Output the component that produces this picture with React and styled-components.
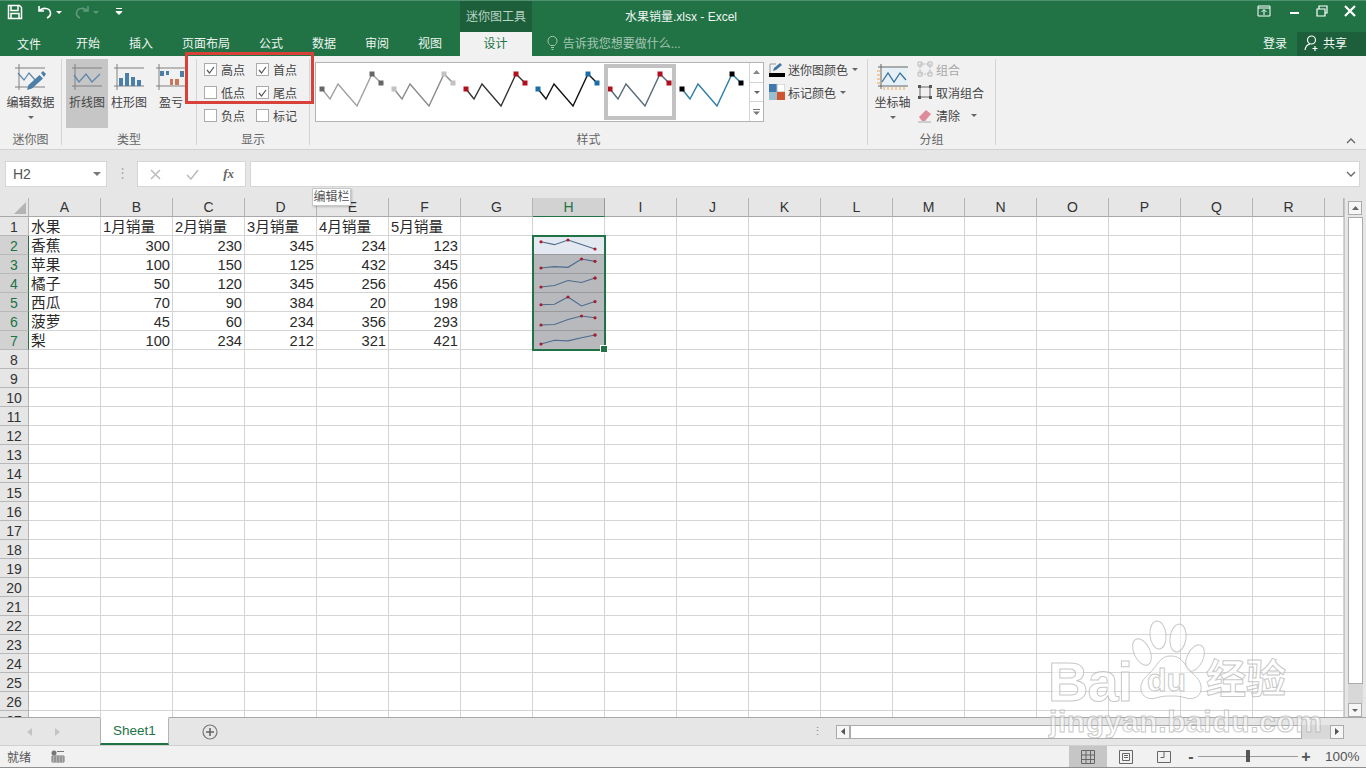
import styled, { createGlobalStyle } from 'styled-components';

const UI_FONT = '"Liberation Sans", "Noto Sans CJK SC", sans-serif';
const GREEN = '#217346';

const GlobalStyle = createGlobalStyle`
    html, body {
        margin: 0;
        padding: 0;
        overflow: hidden;
        background: #f1f1f1;
    }
    * {
        box-sizing: border-box;
    }
`;

const Window = styled.div`
    position: relative;
    width: 1366px;
    height: 768px;
    overflow: hidden;
    display: flex;
    flex-direction: column;
    font-family: ${UI_FONT};
    font-size: 12px;
    color: #444;
`;

/* title bar */
const TitleBar = styled.div`
    height: 32px;
    flex: none;
    display: flex;
    background: ${GREEN};
    border-top: 1px solid #4f9270;
    color: #fff;
`;
const Quick = styled.div`
    width: 460px;
    display: flex;
    align-items: flex-start;
    padding: 3px 0 0 7px;
`;
const ContextLabel = styled.div`
    width: 72px;
    background: #1c5f3a;
    color: #b9d3c4;
    display: flex;
    align-items: center;
    justify-content: center;
    padding-bottom: 3px;
`;
const DocTitle = styled.div`
    padding: 6px 0 0 93px;
    flex: 1;
    color: #f0f6f2;
`;
const WinButtons = styled.div`
    display: flex;
    align-items: flex-start;
    gap: 14px;
    padding: 3px 9px 0 0;
`;

/* tabs */
const TabBar = styled.div`
    height: 24px;
    flex: none;
    display: flex;
    align-items: stretch;
    background: ${GREEN};
    color: #fff;
`;
const Tab = styled.div`
    padding: 0 14.5px 3px;
    display: flex;
    align-items: center;
    white-space: nowrap;
    color: #eef5f0;
    &:first-child {
        padding: 0 20.5px 2px 17px;
    }
`;
const ActiveTab = styled.div`
    width: 72px;
    margin-left: 3px;
    padding-bottom: 3px;
    background: #f1f1f1;
    color: ${GREEN};
    display: flex;
    align-items: center;
    justify-content: center;
`;
const TellMe = styled.div`
    flex: 1;
    display: flex;
    align-items: center;
    gap: 5px;
    padding: 0 0 3px 15px;
    color: #a5c6b3;
`;
const Login = styled.div`
    padding: 0 10px 3px 0;
    display: flex;
    align-items: center;
    color: #f2f7f4;
`;
const Share = styled.div`
    width: 69px;
    background: #1c5f3a;
    display: flex;
    align-items: center;
    gap: 3px;
    padding: 0 0 3px 7px;
    color: #f2f7f4;
`;

/* ribbon */
const Ribbon = styled.div`
    position: relative;
    height: 94px;
    flex: none;
    display: flex;
    align-items: flex-start;
    background: #f1f1f1;
    border-bottom: 1px solid #d2d2d2;
    padding-top: 3px;
`;
const Group = styled.div`
    width: ${(p) => p.$w}px;
    height: 86px;
    flex: none;
    display: flex;
    flex-direction: column;
    border-right: 1px solid #d4d4d4;
`;
const GroupBody = styled.div`
    height: 69px;
    flex: none;
    display: flex;
    padding-left: ${(p) => p.$pad || 0}px;
`;
const GroupLabel = styled.div`
    flex: none;
    margin-top: 4px;
    text-align: center;
    color: #666;
    line-height: 17px;
`;
const BigButton = styled.div`
    width: ${(p) => p.$w || 42}px;
    height: 69px;
    flex: none;
    display: flex;
    flex-direction: column;
    align-items: center;
    padding-top: 3px;
    background: ${(p) => (p.$on ? '#c6c6c6' : 'transparent')};
    color: #444;
    white-space: nowrap;
`;
const BigText = styled.div`
    line-height: 16px;
    margin-top: 3px;
`;
const Caret = styled.span`
    width: 0;
    height: 0;
    display: inline-block;
    border-left: 3px solid transparent;
    border-right: 3px solid transparent;
    border-top: 3px solid ${(p) => p.$c || '#666'};
`;
const BigCaret = styled(Caret)`
    margin-top: 5px;
`;
const Checks = styled.div`
    display: grid;
    grid-template-columns: 52px 52px;
    grid-auto-rows: 23px;
    padding-left: 7px;
    margin-top: -1px;
`;
const CheckItem = styled.label`
    display: flex;
    align-items: center;
    gap: 4px;
    color: #444;
`;
const CheckBox = styled.span`
    width: 13px;
    height: 13px;
    flex: none;
    background: #fff;
    border: 1px solid #ababab;
    display: flex;
    align-items: center;
    justify-content: center;
`;
const Gallery = styled.div`
    margin: 3px 0 0 5px;
    width: 449px;
    height: 60px;
    display: flex;
    background: #fff;
    border: 1px solid #b4b4b4;
    padding-left: 1px;
`;
const Swatch = styled.div`
    width: 72px;
    height: ${(p) => (p.$on ? 56 : 58)}px;
    flex: none;
    margin: ${(p) => (p.$on ? '1px 1px 1px -1px' : '0')};
    border: ${(p) => (p.$on ? '4px solid #c2c2c2' : 'none')};
    display: flex;
`;
const GalleryNav = styled.div`
    margin-left: auto;
    width: 14px;
    display: flex;
    flex-direction: column;
    border-left: 1px solid #d4d4d4;
`;
const NavCell = styled.div`
    flex: 1;
    display: flex;
    align-items: center;
    justify-content: center;
    border-bottom: 1px solid #d4d4d4;
    &:last-child {
        border-bottom: none;
    }
`;
const ColorStack = styled.div`
    display: flex;
    flex-direction: column;
    gap: 3px;
    margin: 0 0 0 ${(p) => p.$left || 5}px;
    white-space: nowrap;
`;
const SmallButton = styled.div`
    height: 20px;
    display: flex;
    align-items: center;
    gap: 3px;
    color: ${(p) => (p.$off ? '#a8a8a8' : '#444')};
`;
const Collapse = styled.div`
    position: absolute;
    right: 10px;
    bottom: 5px;
`;

/* formula bar */
const FormulaBar = styled.div`
    height: 48px;
    flex: none;
    display: flex;
    align-items: flex-start;
    background: #e6e6e6;
    padding: 11px 6px 0 5px;
`;
const NameBox = styled.div`
    width: 102px;
    height: 26px;
    background: #fff;
    border: 1px solid #d6d6d6;
    display: flex;
    align-items: center;
    justify-content: space-between;
    padding: 0 5px 0 7px;
    font-size: 14px;
    color: #555;
`;
const Grip = styled.div`
    width: 30px;
    text-align: center;
    color: #aaa;
    line-height: 24px;
    font-size: 13px;
`;
const FxBox = styled.div`
    width: 109px;
    height: 26px;
    background: #fff;
    border: 1px solid #d6d6d6;
    display: flex;
    align-items: center;
    justify-content: space-between;
    padding: 0 11px 0 12px;
`;
const FxGlyph = styled.span`
    font-family: "Liberation Serif", serif;
    font-style: italic;
    font-weight: 700;
    font-size: 13px;
    color: #666;
`;
const FormulaInput = styled.div`
    margin-left: 4px;
    flex: 1;
    height: 26px;
    background: #fff;
    border: 1px solid #d6d6d6;
    display: flex;
    align-items: center;
    justify-content: flex-end;
    padding-right: 3px;
`;
const Hint = styled.div`
    position: absolute;
    left: 312px;
    top: 188px;
    width: 39px;
    height: 18px;
    background: #fff;
    border: 1px solid #c8c8c8;
    box-shadow: 1px 1px 2px rgba(0, 0, 0, 0.2);
    font-size: 12px;
    line-height: 16px;
    text-align: center;
    color: #555;
    white-space: nowrap;
    z-index: 3;
`;

/* sheet */
const SheetRow = styled.div`
    height: 519px;
    flex: none;
    display: flex;
`;
const SheetView = styled.div`
    position: relative;
    width: 1344px;
    overflow: hidden;
    background: #fff;
`;
const SheetGrid = styled.div`
    display: grid;
    grid-template-columns: 29px repeat(18, 72px) 1fr;
    grid-auto-rows: 19px;
`;
const ColHead = styled.div`
    background: ${(p) => (p.$on ? '#d2d2d2' : '#e6e6e6')};
    border-right: 1px solid ${(p) => (p.$on ? '#9a9a9a' : '#b4b4b4')};
    border-bottom: 1px solid ${(p) => (p.$on ? GREEN : '#a8a8a8')};
    color: ${(p) => (p.$on ? GREEN : '#333')};
    font-size: 14px;
    line-height: 19px;
    text-align: center;
    position: relative;
`;
const CornerMark = styled.span`
    position: absolute;
    right: 2px;
    bottom: 2px;
    width: 0;
    height: 0;
    border-left: 12px solid transparent;
    border-bottom: 12px solid #b4b4b4;
`;
const RowHead = styled.div`
    background: ${(p) => (p.$on ? '#d2d2d2' : '#e6e6e6')};
    border-right: 1px solid ${(p) => (p.$on ? GREEN : '#b4b4b4')};
    border-bottom: 1px solid #b8b8b8;
    color: ${(p) => (p.$on ? GREEN : '#333')};
    font-size: 14px;
    line-height: 20px;
    text-align: center;
`;
const Cell = styled.div`
    border-right: 1px solid #d4d4d4;
    border-bottom: 1px solid #d4d4d4;
    font-size: 14.67px;
    line-height: 20px;
    color: #2a2a2a;
    padding: 0 2px;
    white-space: nowrap;
    overflow: visible;
    text-align: ${(p) => (p.$num ? 'right' : 'left')};
`;
const SparkCell = styled.div`
    background: ${(p) => (p.$active ? '#e4e8f0' : '#b7b9bd')};
    border-right: 1px solid #9a9a9a;
    border-bottom: 1px solid #9a9a9a;
`;
const Selection = styled.div`
    position: absolute;
    left: 532px;
    top: 37px;
    width: 74px;
    height: 116px;
    border: 2px solid ${GREEN};
    pointer-events: none;
`;
const Handle = styled.span`
    position: absolute;
    right: -4px;
    bottom: -4px;
    width: 6px;
    height: 6px;
    background: ${GREEN};
    border: 1px solid #fff;
    box-sizing: content-box;
`;
const VScroll = styled.div`
    width: 22px;
    background: #e6e6e6;
    border-left: 1px solid #c6c6c6;
    display: flex;
    flex-direction: column;
    padding: 3px 3px 0 3px;
`;
const ScrollBtn = styled.div`
    width: 14px;
    height: 14px;
    flex: none;
    background: #f6f6f6;
    border: 1px solid #ababab;
    display: flex;
    align-items: center;
    justify-content: center;
`;
const VThumb = styled.div`
    margin-top: 2px;
    height: 467px;
    flex: none;
    background: #fff;
    border: 1px solid #ababab;
`;
const VTrack = styled.div`
    flex: 1;
    background: #d8d8d8;
`;

/* sheet tabs */
const TabsBar = styled.div`
    height: 28px;
    flex: none;
    display: flex;
    align-items: stretch;
    background: #e6e6e6;
    border-top: 1px solid #a8a8a8;
`;
const SheetNav = styled.div`
    width: 100px;
    display: flex;
    align-items: center;
    gap: 23px;
    padding-left: 27px;
`;
const SheetTab = styled.div`
    width: 69px;
    margin-top: -1px;
    background: #fff;
    border: 1px solid #b4b4b4;
    border-top-color: #fff;
    border-bottom: 2px solid ${GREEN};
    color: ${GREEN};
    font-size: 13.5px;
    display: flex;
    align-items: center;
    justify-content: center;
`;
const AddSheet = styled.div`
    width: 82px;
    display: flex;
    align-items: center;
    justify-content: center;
`;
const SplitDots = styled.div`
    width: 585px;
    display: flex;
    align-items: center;
    justify-content: flex-end;
    padding-right: 13px;
    color: #888;
    font-size: 11px;
`;
const HScroll = styled.div`
    width: 508px;
    display: flex;
    align-items: center;
`;
const HThumb = styled.div`
    width: 452px;
    height: 14px;
    flex: none;
    background: #fff;
    border: 1px solid #ababab;
`;
const HTrack = styled.div`
    flex: 1;
    height: 14px;
    background: #d8d8d8;
`;

/* status bar */
const StatusBar = styled.div`
    flex: 1;
    display: flex;
    align-items: center;
    background: #f1f1f1;
    border-top: 1px solid #d0d0d0;
    border-bottom: 1px solid #8f8f8f;
    padding-left: 7px;
    color: #555;
`;
const StatusLeft = styled.div`
    flex: 1;
    display: flex;
    align-items: center;
    gap: 20px;
`;
const ViewButton = styled.div`
    width: 38px;
    align-self: stretch;
    display: flex;
    align-items: center;
    justify-content: center;
    background: ${(p) => (p.$on ? '#c6c6c6' : 'transparent')};
`;
const Zoom = styled.div`
    display: flex;
    align-items: center;
    margin-left: 3px;
    color: #555;
`;
const ZoomTrack = styled.div`
    position: relative;
    width: 100px;
    height: 1px;
    margin: 0 3px 0 2px;
    background: #9a9a9a;
`;
const ZoomThumb = styled.span`
    position: absolute;
    left: 48px;
    top: -6px;
    width: 4px;
    height: 12px;
    background: #555;
`;
const ZoomSign = styled.span`
    width: 10px;
    text-align: center;
    font-size: 16px;
    font-weight: 700;
    line-height: 16px;
`;
const ZoomValue = styled.span`
    width: 55px;
    padding-left: 14px;
    font-size: 13.5px;
    white-space: nowrap;
`;

/* over the page */
const Marker = styled.div`
    position: absolute;
    left: 185px;
    top: 52px;
    width: 129px;
    height: 52px;
    border: 3px solid #d8403a;
    pointer-events: none;
    z-index: 4;
`;
const Watermark = styled.div`
    position: absolute;
    left: 1046px;
    top: 620px;
    width: 250px;
    height: 122px;
    pointer-events: none;
    z-index: 5;
`;
const MarkText = styled.span`
    position: absolute;
    left: ${(p) => p.$x}px;
    top: ${(p) => p.$y}px;
    font-family: ${UI_FONT};
    font-size: ${(p) => p.$size}px;
    font-weight: 700;
    line-height: 0.9;
    letter-spacing: ${(p) => p.$ls || 0}px;
    white-space: nowrap;
    color: rgba(255, 255, 255, 0.55);
    -webkit-text-stroke: 1px rgba(175, 175, 175, 0.7);
`;

/* drawings */
const Svg = ({ w, h, children, ...rest }) => (
    <svg width={w} height={h} viewBox={`0 0 ${w} ${h}`} fill="none" style={{ display: 'block', flex: 'none' }} {...rest}>
        {children}
    </svg>
);

const ChartFrame = () => <path d="M4 2v26M1 6h30M1 24h30" stroke="#808080" strokeWidth="1" />;

const LineIcon = () => (
    <Svg w={32} h={30}>
        <ChartFrame />
        <path d="M3 13l5 7 7-8 6 8 8-8" stroke="#5d87ac" strokeWidth="1.3" />
    </Svg>
);
const BarIcon = () => (
    <Svg w={32} h={30}>
        <ChartFrame />
        <path d="M6 16h4v8H6zM12 11h4v13h-4zM18 15h4v9h-4zM24 18h4v6h-4z" fill="#4b7fa8" />
    </Svg>
);
const WinLossIcon = () => (
    <Svg w={32} h={30}>
        <ChartFrame />
        <path d="M5 9h4v5H5zM11 9h3v4h-3zM25 9h4v6h-4z" fill="#4b7fa8" />
        <path d="M15 17h3v6h-3zM20 17h4v6h-4z" fill="#c9775b" />
    </Svg>
);
const EditDataIcon = () => (
    <Svg w={34} h={29} style={{ display: 'block', flex: 'none', marginTop: 1 }}>
        <path d="M5 1v26M1 5h30M1 24h30" stroke="#808080" strokeWidth="1" />
        <path d="M4 10l6 7 5-7 7 8" stroke="#5d87ac" strokeWidth="1.2" />
        <path d="M13 27l1.500-5 11-10 3.500 3.500-11 10z" fill="#4b7fa8" />
        <path d="M27 10l2-2 3 3-2 3z" fill="#4b7fa8" />
    </Svg>
);
const AxisIcon = () => (
    <Svg w={33} h={29} style={{ display: 'block', flex: 'none', marginTop: 1 }}>
        <rect x="5" y="4" width="26" height="20" fill="#e6f0f7" />
        <path d="M5 1v25M2 4h30M2 23h30" stroke="#666" />
        <path d="M1 8h4M1 12h4M1 16h4M1 20h4M8 24v3M12 24v3M16 24v3M20 24v3M24 24v3M28 24v3" stroke="#eba45a" />
        <path d="M6 19l6-9 6 9 6-9 6 7" stroke="#3f6f96" strokeWidth="1.3" />
    </Svg>
);

const Check = () => (
    <Svg w={9} h={8}>
        <path d="M1 4l2.500 3L8 1" stroke="#555" strokeWidth="1.2" />
    </Svg>
);

const galleryPoints = [[5, 26], [13, 36], [21, 21], [40, 43], [55, 11], [64, 20]];
const galleryStyles = [
    { line: '#a0a0a0', mark: '#666' },
    { line: '#8a8a8a', mark: '#c2c2c2' },
    { line: '#333', mark: '#b0101c' },
    { line: '#111', mark: '#1a6ea8' },
    { line: '#586878', mark: '#b0101c', on: true },
    { line: '#2b7da8', mark: '#000' },
];

// the selected swatch has a border, so its drawing sits a little further in
const GallerySpark = ({ line, mark, on }) => {
    const dx = on ? 3 : 0;
    const dy = on ? 5 : 0;
    const pts = galleryPoints.map(([x, y]) => [x - dx, y - dy]);
    const marked = [pts[0], pts[4], pts[5]];
    return (
        <Svg w={on ? 64 : 72} h={on ? 48 : 58}>
            <polyline points={pts.map((p) => p.join(',')).join(' ')} stroke={line} strokeWidth="1.4" />
            {marked.map(([x, y]) => (
                <rect key={x} x={x - 2.5} y={y - 2.5} width="5" height="5" fill={mark} />
            ))}
        </Svg>
    );
};

const CellSpark = ({ values }) => {
    const max = Math.max(...values);
    const min = Math.min(...values);
    const pts = values.map((v, i) => [8 + i * 13.5, 4 + (1 - (v - min) / (max - min)) * 9]);
    const marks = [0, values.indexOf(max), values.length - 1];
    return (
        <Svg w={71} h={18}>
            <polyline points={pts.map((p) => p.join(',')).join(' ')} stroke="#4d6c8e" strokeWidth="1.1" />
            {marks.map((i) => (
                <circle key={i} cx={pts[i][0]} cy={pts[i][1]} r="1.6" fill="#a81c30" />
            ))}
        </Svg>
    );
};

const columns = ['A', 'B', 'C', 'D', 'E', 'F', 'G', 'H', 'I', 'J', 'K', 'L', 'M', 'N', 'O', 'P', 'Q', 'R', ''];
const headerRow = ['水果', '1月销量', '2月销量', '3月销量', '4月销量', '5月销量'];
const fruits = [
    ['香蕉', 300, 230, 345, 234, 123],
    ['苹果', 100, 150, 125, 432, 345],
    ['橘子', 50, 120, 345, 256, 456],
    ['西瓜', 70, 90, 384, 20, 198],
    ['菠萝', 45, 60, 234, 356, 293],
    ['梨', 100, 234, 212, 321, 421],
];

const renderRow = (rowNo) => {
    const fruit = fruits[rowNo - 2];
    const source = rowNo === 1 ? headerRow : fruit;
    return columns.map((col, i) => {
        const key = `${rowNo}-${i}`;
        if (fruit && col === 'H') {
            return (
                <SparkCell key={key} $active={rowNo === 2}>
                    <CellSpark values={fruit.slice(1)} />
                </SparkCell>
            );
        }
        const value = source ? source[i] : undefined;
        return (
            <Cell key={key} $num={typeof value === 'number'}>
                {value}
            </Cell>
        );
    });
};

const rows = Array.from({ length: 27 }, (_, i) => i + 1);

function App() {
    return (
        <Window>
            <GlobalStyle />
            <TitleBar>
                <Quick>
                    <Svg w={16} h={16} style={{ marginRight: 14 }}>
                        <path d="M1.500 1.500h11l2 2v11h-13zM4 1.500v5h7v-5M4 14.500v-5h8v5" stroke="#fff" strokeWidth="1.5" />
                    </Svg>
                    <Svg w={16} h={16} style={{ marginRight: 3 }}>
                        <path d="M2 2v5h5M2.500 7C5 3.500 13 3 13.500 9c.2 2.500-1.500 4-3.500 5" stroke="#fff" strokeWidth="1.6" />
                    </Svg>
                    <Caret $c="#fff" style={{ marginTop: 7, marginRight: 12 }} />
                    <Svg w={16} h={16} style={{ marginRight: 3 }}>
                        <path d="M14 2v5H9M13.500 7C11 3.500 3 3 2.500 9c-.2 2.500 1.500 4 3.500 5" stroke="#5f9a7b" strokeWidth="1.6" />
                    </Svg>
                    <Caret $c="#5f9a7b" style={{ marginTop: 7, marginRight: 16 }} />
                    <Svg w={8} h={9} style={{ marginTop: 3 }}>
                        <path d="M1 1.500h6M1 4.500h6l-3 3z" stroke="#fff" fill="#fff" strokeWidth="1" />
                    </Svg>
                </Quick>
                <ContextLabel>迷你图工具</ContextLabel>
                <DocTitle>水果销量.xlsx - Excel</DocTitle>
                <WinButtons>
                    <Svg w={14} h={14}>
                        <path d="M1 2h12v10H1zM1 4h12M7 11V6M4.500 8L7 5.500 9.500 8" stroke="#fff" />
                    </Svg>
                    <Svg w={14} h={14} style={{ marginLeft: 2 }}>
                        <path d="M3 9h9" stroke="#fff" strokeWidth="2" />
                    </Svg>
                    <Svg w={14} h={14}>
                        <path d="M2 5h8v7H2zM4 5V2h8v7h-2" stroke="#fff" strokeWidth="1.2" />
                    </Svg>
                    <Svg w={14} h={14}>
                        <path d="M2 2l10 10M12 2L2 12" stroke="#fff" strokeWidth="2.2" />
                    </Svg>
                </WinButtons>
            </TitleBar>

            <TabBar>
                <Tab>文件</Tab>
                <Tab>开始</Tab>
                <Tab>插入</Tab>
                <Tab>页面布局</Tab>
                <Tab>公式</Tab>
                <Tab>数据</Tab>
                <Tab>审阅</Tab>
                <Tab>视图</Tab>
                <ActiveTab>设计</ActiveTab>
                <TellMe>
                    <Svg w={11} h={15}>
                        <path d="M3.500 10.500C2 9 1 8 1 5.800a4.500 4.500 0 0 1 9 0c0 2.200-1 3.200-2.500 4.700zM4 12.500h3M4.500 14.500h2" stroke="#a5c6b3" />
                    </Svg>
                    告诉我您想要做什么...
                </TellMe>
                <Login>登录</Login>
                <Share>
                    <Svg w={16} h={17}>
                        <circle cx="7.5" cy="6" r="4" stroke="#fff" strokeWidth="1.2" />
                        <path d="M1 16c.5-3.500 2.500-5.500 5-6M11 12v5M8.500 14.500h5" stroke="#fff" strokeWidth="1.2" />
                    </Svg>
                    共享
                </Share>
            </TabBar>

            <Ribbon>
                <Group $w={62}>
                    <GroupBody $pad={7}>
                        <BigButton $w={47}>
                            <EditDataIcon />
                            <BigText>编辑数据</BigText>
                            <BigCaret />
                        </BigButton>
                    </GroupBody>
                    <GroupLabel>迷你图</GroupLabel>
                </Group>
                <Group $w={135}>
                    <GroupBody $pad={4}>
                        <BigButton $on>
                            <LineIcon />
                            <BigText>折线图</BigText>
                        </BigButton>
                        <BigButton>
                            <BarIcon />
                            <BigText>柱形图</BigText>
                        </BigButton>
                        <BigButton>
                            <WinLossIcon />
                            <BigText>盈亏</BigText>
                        </BigButton>
                    </GroupBody>
                    <GroupLabel>类型</GroupLabel>
                </Group>
                <Group $w={113}>
                    <GroupBody>
                        <Checks>
                            {[['高点', true], ['首点', true], ['低点', false], ['尾点', true], ['负点', false], ['标记', false]].map(([label, on]) => (
                                <CheckItem key={label}>
                                    <CheckBox>{on && <Check />}</CheckBox>
                                    {label}
                                </CheckItem>
                            ))}
                        </Checks>
                    </GroupBody>
                    <GroupLabel>显示</GroupLabel>
                </Group>
                <Group $w={558}>
                    <GroupBody>
                        <Gallery>
                            {galleryStyles.map((s, i) => (
                                <Swatch key={i} $on={s.on}>
                                    <GallerySpark line={s.line} mark={s.mark} on={s.on} />
                                </Swatch>
                            ))}
                            <GalleryNav>
                                <NavCell>
                                    <Svg w={7} h={4}><path d="M3.500 0L7 4H0z" fill="#888" /></Svg>
                                </NavCell>
                                <NavCell>
                                    <Caret />
                                </NavCell>
                                <NavCell>
                                    <Svg w={7} h={6}><path d="M0 .5h7" stroke="#777" /><path d="M0 2.500h7L3.500 6z" fill="#777" /></Svg>
                                </NavCell>
                            </GalleryNav>
                        </Gallery>
                        <ColorStack>
                            <SmallButton>
                                <Svg w={16} h={16}>
                                    <path d="M4 10l1-3 6-5 2 2-6 5z" fill="#3d77a6" />
                                    <path d="M1 3h6M1 3v9" stroke="#999" />
                                    <rect x="0" y="12" width="16" height="4" fill="#000" />
                                </Svg>
                                迷你图颜色
                                <Caret style={{ marginLeft: 1 }} />
                            </SmallButton>
                            <SmallButton>
                                <Svg w={16} h={16}>
                                    <rect width="8" height="8" fill="#3f78ae" />
                                    <rect x="8" width="8" height="8" fill="#fff" stroke="#bbb" />
                                    <rect y="8" width="8" height="8" fill="#9cbcd0" />
                                    <rect x="8" y="8" width="8" height="8" fill="#d2532f" />
                                </Svg>
                                标记颜色
                                <Caret style={{ marginLeft: 1 }} />
                            </SmallButton>
                        </ColorStack>
                    </GroupBody>
                    <GroupLabel>样式</GroupLabel>
                </Group>
                <Group $w={128}>
                    <GroupBody $pad={5}>
                        <BigButton $w={39}>
                            <AxisIcon />
                            <BigText>坐标轴</BigText>
                            <BigCaret />
                        </BigButton>
                        <ColorStack>
                            <SmallButton $off>
                                <Svg w={16} h={16}>
                                    <path d="M3 3h10v10H3z" stroke="#bbb" strokeDasharray="2 1" />
                                    <path d="M1 1h4v4H1zM11 1h4v4h-4zM1 11h4v4H1zM11 11h4v4h-4z" stroke="#bbb" />
                                </Svg>
                                组合
                            </SmallButton>
                            <SmallButton>
                                <Svg w={16} h={16}>
                                    <path d="M3 3h10v10H3z" stroke="#666" />
                                    <path d="M1 1h3v3H1zM12 1h3v3h-3zM1 12h3v3H1zM12 12h3v3h-3z" fill="#555" />
                                </Svg>
                                取消组合
                            </SmallButton>
                            <SmallButton>
                                <Svg w={16} h={16}>
                                    <path d="M2 10l7-7 5 4-6 7H5z" fill="#e08b9c" />
                                    <path d="M1 15h13" stroke="#aaa" />
                                </Svg>
                                清除
                                <Caret style={{ marginLeft: 8 }} />
                            </SmallButton>
                        </ColorStack>
                    </GroupBody>
                    <GroupLabel>分组</GroupLabel>
                </Group>
                <Collapse>
                    <Svg w={10} h={6}>
                        <path d="M1 5l4-4 4 4" stroke="#666" strokeWidth="1.3" />
                    </Svg>
                </Collapse>
            </Ribbon>

            <FormulaBar>
                <NameBox>
                    H2
                    <Caret $c="#777" style={{ borderWidth: '4px 4px 0' }} />
                </NameBox>
                <Grip>⋮</Grip>
                <FxBox>
                    <Svg w={11} h={11}>
                        <path d="M1 1l9 9M10 1l-9 9" stroke="#bbb" strokeWidth="1.5" />
                    </Svg>
                    <Svg w={13} h={11}>
                        <path d="M1 6l4 4 7-9" stroke="#bbb" strokeWidth="1.5" />
                    </Svg>
                    <FxGlyph>fx</FxGlyph>
                </FxBox>
                <FormulaInput>
                    <Svg w={10} h={6}>
                        <path d="M1 1l4 4 4-4" stroke="#666" strokeWidth="1.3" />
                    </Svg>
                </FormulaInput>
            </FormulaBar>
            <Hint>编辑栏</Hint>

            <SheetRow>
                <SheetView>
                    <SheetGrid>
                        <ColHead>
                            <CornerMark />
                        </ColHead>
                        {columns.map((col, i) => (
                            <ColHead key={i} $on={col === 'H'}>{col}</ColHead>
                        ))}
                        {rows.map((rowNo) => [
                            <RowHead key={rowNo} $on={rowNo >= 2 && rowNo <= 7}>{rowNo}</RowHead>,
                            ...renderRow(rowNo),
                        ])}
                    </SheetGrid>
                    <Selection>
                        <Handle />
                    </Selection>
                </SheetView>
                <VScroll>
                    <ScrollBtn>
                        <Svg w={7} h={4}><path d="M3.500 0L7 4H0z" fill="#666" /></Svg>
                    </ScrollBtn>
                    <VThumb />
                    <VTrack />
                    <ScrollBtn>
                        <Caret />
                    </ScrollBtn>
                </VScroll>
            </SheetRow>

            <TabsBar>
                <SheetNav>
                    <Svg w={5} h={8}><path d="M5 0v8L0 4z" fill="#c4c4c4" /></Svg>
                    <Svg w={5} h={8}><path d="M0 0v8l5-4z" fill="#c4c4c4" /></Svg>
                </SheetNav>
                <SheetTab>Sheet1</SheetTab>
                <AddSheet>
                    <Svg w={16} h={16}>
                        <circle cx="8" cy="8" r="7" stroke="#777" strokeWidth="1.2" />
                        <path d="M8 4v8M4 8h8" stroke="#666" strokeWidth="1.6" />
                    </Svg>
                </AddSheet>
                <SplitDots>⋮</SplitDots>
                <HScroll>
                    <ScrollBtn>
                        <Svg w={4} h={7}><path d="M4 0v7L0 3.500z" fill="#555" /></Svg>
                    </ScrollBtn>
                    <HThumb />
                    <HTrack />
                    <ScrollBtn>
                        <Svg w={4} h={7}><path d="M0 0v7l4-3.500z" fill="#555" /></Svg>
                    </ScrollBtn>
                </HScroll>
            </TabsBar>

            <StatusBar>
                <StatusLeft>
                    就绪
                    <Svg w={14} h={13}>
                        <circle cx="3" cy="3" r="2.5" fill="#777" />
                        <path d="M6 1.500h7M1 6h12v6H1zM1 8h12M1 10h12M4 6v6M7 6v6M10 6v6" stroke="#777" />
                    </Svg>
                </StatusLeft>
                <ViewButton $on>
                    <Svg w={14} h={14}>
                        <path d="M.5.5h13v13H.5zM.5 5h13M.5 9.500h13M5 .5v13M9.500 .5v13" stroke="#666" />
                    </Svg>
                </ViewButton>
                <ViewButton>
                    <Svg w={14} h={14}>
                        <path d="M.5.5h13v13H.5zM3.500 3.500h7v7h-7zM5 5.500h4M5 7.500h4" stroke="#666" />
                    </Svg>
                </ViewButton>
                <ViewButton>
                    <Svg w={14} h={14}>
                        <path d="M.5 1.500h13v11H.5zM7 1.500v6H3.500" stroke="#666" />
                    </Svg>
                </ViewButton>
                <Zoom>
                    <ZoomSign>-</ZoomSign>
                    <ZoomTrack>
                        <ZoomThumb />
                    </ZoomTrack>
                    <ZoomSign>+</ZoomSign>
                    <ZoomValue>100%</ZoomValue>
                </Zoom>
            </StatusBar>

            <Marker />

            <Watermark>
                <Svg w={250} h={122}>
                    <g stroke="rgba(175,175,175,0.7)" fill="rgba(255,255,255,0.5)">
                        <ellipse cx="112" cy="15" rx="8" ry="14" transform="rotate(-6 112 15)" />
                        <ellipse cx="132" cy="18" rx="8" ry="14" transform="rotate(8 132 18)" />
                        <ellipse cx="96" cy="32" rx="8" ry="14" transform="rotate(-25 96 32)" />
                        <ellipse cx="149" cy="38" rx="8" ry="14" transform="rotate(25 149 38)" />
                        <path d="M124 36c-10 0-13 10-20 17-6 5-10 10-9 17 1 7 8 10 15 8 6-2 10-2 15-2s9 0 15 2c7 2 14-1 15-8 1-7-3-12-9-17-7-7-10-17-20-17z" />
                    </g>
                </Svg>
                <MarkText $x={2} $y={37} $size={56} $ls={-1}>Bai</MarkText>
                <MarkText $x={101} $y={46} $size={32}>du</MarkText>
                <MarkText $x={160} $y={38} $size={40} style={{ fontFamily: '"Noto Sans CJK SC", sans-serif' }}>经验</MarkText>
                <MarkText $x={3} $y={88} $size={30} $ls={0.6}>jingyan.baidu.com</MarkText>
            </Watermark>
        </Window>
    );
}

export default App;
